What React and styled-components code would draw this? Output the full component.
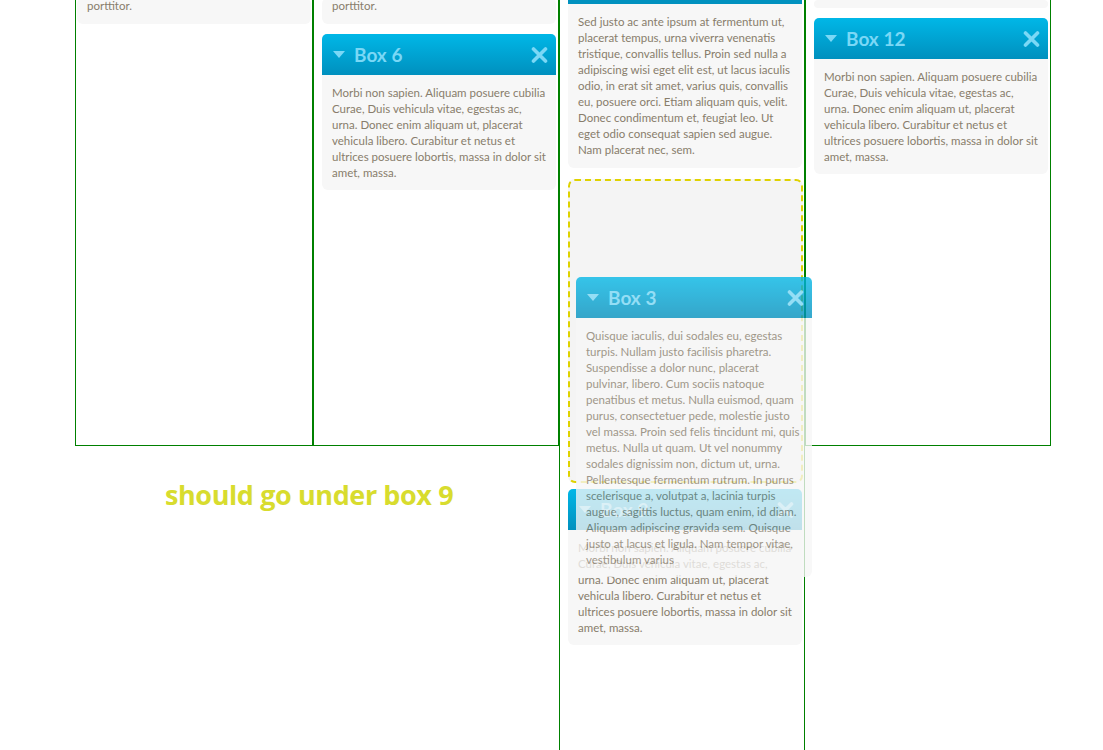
import React from 'react';
import styled, { createGlobalStyle } from 'styled-components';

const GlobalStyle = createGlobalStyle`
  html, body {
    margin: 0;
    padding: 0;
    overflow: hidden;
    background: #fff;
  }
  body {
    font-family: Lato, "Liberation Sans", sans-serif;
  }
`;

const Board = styled.div`
  display: grid;
  grid-template-columns: 238px 246px 246px 246px;
  grid-template-rows: 446px auto;
  width: 976px;
  margin-left: 75px;
`;

const Column = styled.div`
  position: relative;
  box-sizing: border-box;
  border: 1px solid #008000;
  border-top: none;
  padding: 0 ${(p) => p.$padRight}px 0 ${(p) => p.$padLeft}px;
  grid-row: ${(p) => (p.$tall ? '1 / span 2' : '1')};
  min-height: ${(p) => (p.$tall ? '780px' : '0')};
`;

const Note = styled.div`
  grid-column: 1 / span 2;
  grid-row: 2;
  padding: 32px 0 0 90px;
  font-family: "Open Sans", sans-serif;
  font-weight: 700;
  font-size: 27px;
  line-height: 34px;
  color: #d8dc2e;
  letter-spacing: -0.4px;
`;

const Card = styled.div`
  width: ${(p) => p.$width || 234}px;
  margin-bottom: ${(p) => (p.$gap ?? 10)}px;
`;

const Dragged = styled(Card)`
  position: absolute;
  left: 16px;
  top: 277px;
  z-index: 10;
  opacity: 0.78;
`;

const Header = styled.div`
  box-sizing: border-box;
  height: ${(p) => p.$height || 41}px;
  display: flex;
  align-items: center;
  padding: 0 8px 0 11px;
  border-radius: ${(p) => (p.$cut ? '0' : '5px 5px 0 0')};
  background: ${(p) =>
    p.$cut ? '#0091bf' : 'linear-gradient(#00b7e7, #0090be)'};
  color: #7ad8f6;
`;

const Title = styled.span`
  flex: 1;
  margin-left: 9px;
  font-weight: 700;
  font-size: 19px;
  line-height: 20px;
`;

const Body = styled.div`
  box-sizing: border-box;
  background: #f7f7f7;
  border-radius: ${(p) => (p.$flatTop ? '0 0 6px 6px' : '6px')};
  padding: ${(p) => p.$pad || '10px 10px 9px'};
  height: ${(p) => (p.$height ? `${p.$height}px` : 'auto')};
  font-size: 11.5px;
  line-height: 16px;
  color: #887d6b;
`;

const Line = styled.div`
  white-space: nowrap;
  margin-top: ${(p) => p.$shift || 0}px;
`;

const Placeholder = styled.div`
  box-sizing: border-box;
  width: 235px;
  height: 304px;
  margin-bottom: 6px;
  border: 2px dashed #dfd200;
  border-radius: 7px;
  background: #f4f4f4;
`;

const Arrow = () => (
  <svg width="12" height="7" viewBox="0 0 12 7">
    <polygon points="0,0 12,0 6,7" fill="currentColor" />
  </svg>
);

const CloseIcon = () => (
  <svg width="17" height="16" viewBox="0 0 17 16">
    <path
      d="M2.5 2 L14.5 14 M14.5 2 L2.5 14"
      stroke="currentColor"
      strokeWidth="3.6"
      strokeLinecap="round"
    />
  </svg>
);

const morbi = [
  'Morbi non sapien. Aliquam posuere cubilia',
  'Curae, Duis vehicula vitae, egestas ac,',
  'urna. Donec enim aliquam ut, placerat',
  'vehicula libero. Curabitur et netus et',
  'ultrices posuere lobortis, massa in dolor sit',
  'amet, massa.',
];

const sedJusto = [
  'Sed justo ac ante ipsum at fermentum ut,',
  'placerat tempus, urna viverra venenatis',
  'tristique, convallis tellus. Proin sed nulla a',
  'adipiscing wisi eget elit est, ut lacus iaculis',
  'odio, in erat sit amet, varius quis, convallis',
  'eu, posuere orci. Etiam aliquam quis, velit.',
  'Donec condimentum et, feugiat leo. Ut',
  'eget odio consequat sapien sed augue.',
  'Nam placerat nec, sem.',
];

const quisque = [
  'Quisque iaculis, dui sodales eu, egestas',
  'turpis. Nullam justo facilisis pharetra.',
  'Suspendisse a dolor nunc, placerat',
  'pulvinar, libero. Cum sociis natoque',
  'penatibus et metus. Nulla euismod, quam',
  'purus, consectetuer pede, molestie justo',
  'vel massa. Proin sed felis tincidunt mi, quis',
  'metus. Nulla ut quam. Ut vel nonummy',
  'sodales dignissim non, dictum ut, urna.',
  'Pellentesque fermentum rutrum. In purus',
  'scelerisque a, volutpat a, lacinia turpis',
  'augue, sagittis luctus, quam enim, id diam.',
  'Aliquam adipiscing gravida sem. Quisque',
  'justo at lacus et ligula. Nam tempor vitae,',
  'vestibulum varius',
];

const Portlet = ({ title, lines, as: Wrap = Card, width }) => (
  <Wrap $width={width}>
    <Header>
      <Arrow />
      <Title>{title}</Title>
      <CloseIcon />
    </Header>
    <Body $flatTop>
      {lines.map((l) => (
        <Line key={l}>{l}</Line>
      ))}
    </Body>
  </Wrap>
);

const Tail = ({ text }) => (
  <Card>
    <Body $pad="0 10px 10px">
      <Line $shift={-2}>{text}</Line>
    </Body>
  </Card>
);

export default function App() {
  return (
    <>
      <GlobalStyle />
      <Board>
        <Column $padLeft={1} $padRight={1}>
          <Tail text="porttitor." />
        </Column>
        <Column $padLeft={8} $padRight={2}>
          <Tail text="porttitor." />
          <Portlet title="Box 6" lines={morbi} />
        </Column>
        <Column $padLeft={8} $padRight={2} $tall>
          <Card $gap={11}>
            <Header $cut $height={4} />
            <Body $flatTop $pad="10px 10px 10px">
              {sedJusto.map((l) => (
                <Line key={l}>{l}</Line>
              ))}
            </Body>
          </Card>
          <Placeholder />
          <Portlet title="Box 9" lines={morbi} />
          <Portlet title="Box 3" lines={quisque} as={Dragged} width={236} />
        </Column>
        <Column $padLeft={8} $padRight={2}>
          <Card>
            <Body $pad="0" $height={8} />
          </Card>
          <Portlet title="Box 12" lines={morbi} />
        </Column>
        <Note>should go under box 9</Note>
      </Board>
    </>
  );
}
